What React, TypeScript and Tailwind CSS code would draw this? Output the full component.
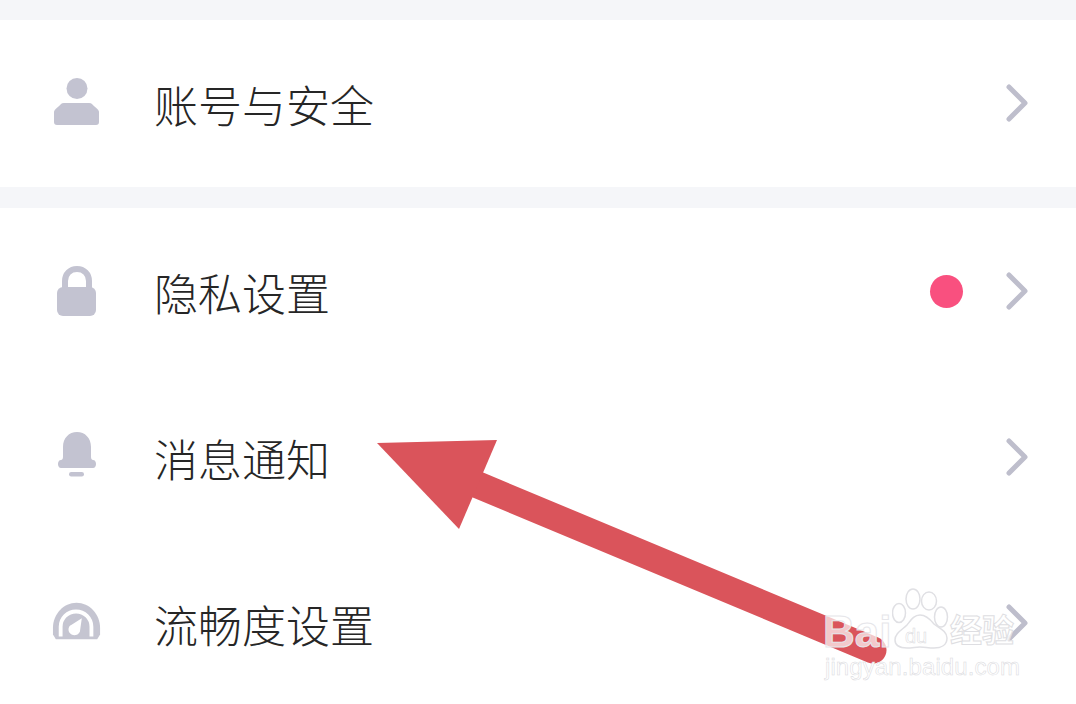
import React, { ReactNode } from 'react';

const font = { fontFamily: '"Noto Sans CJK SC", "Noto Sans", sans-serif' };

function Chevron() {
  return (
    <svg width="24" height="38" viewBox="0 0 24 38" fill="none" className="block">
      <path d="M3 3L19 19L3 35" stroke="#bebecc" strokeWidth="5" strokeLinecap="round" strokeLinejoin="round" />
    </svg>
  );
}

function PersonIcon() {
  return (
    <svg width="48" height="50" viewBox="0 0 48 50" fill="#c3c3d1" className="block">
      <circle cx="24" cy="10.5" r="10.5" />
      <path d="M1 34C1 31 6 29 8 26Q9 25 11 25H36Q38 25 39 26C41 29 46 31 46 34V44C46 46 45 47 43 47H4C2 47 1 46 1 44Z" />
    </svg>
  );
}

function LockIcon() {
  return (
    <svg width="48" height="52" viewBox="0 0 48 52" className="block">
      <path d="M12 26V16C12 9 17 4 24 4C31 4 36 9 36 16V26" fill="none" stroke="#c3c3d1" strokeWidth="6" />
      <rect x="4" y="22" width="39" height="29" rx="6" fill="#c3c3d1" />
    </svg>
  );
}

function BellIcon() {
  return (
    <svg width="48" height="50" viewBox="0 0 48 50" fill="#c3c3d1" className="block">
      <path d="M24 0C32 0 38 6 38 15V25C38 27 39 28 40 28C44 28 44 36 40 36H8C4 36 4 28 8 28C9 28 10 27 10 25V15C10 6 16 0 24 0Z" />
      <rect x="16" y="40" width="15" height="4.5" rx="2.2" />
    </svg>
  );
}

function GaugeIcon() {
  return (
    <svg width="52" height="42" viewBox="0 0 52 42" className="block">
      <path d="M1 33V26C1 12 12 0 25.500 0C39 0 50 12 50 26V33L47 38H4Z" fill="#c5c5d1" />
      <path d="M9 35V25A16 16 0 0 1 41 25V35" fill="none" stroke="#ffffff" strokeWidth="4" />
      <path d="M31 16L29 30C27 34 22 35 19 32C16 29 17 24 20 23Z" fill="#ffffff" />
    </svg>
  );
}

function Row({ icon, label, dot }: { icon: ReactNode; label: string; dot?: boolean }) {
  return (
    <div className="flex h-[166px] items-center pl-[52px] pr-[46px]">
      <div className="flex w-[50px] justify-center">{icon}</div>
      <div className="ml-[52px] flex-1 pt-[2px] text-[44px] font-light leading-none text-[#262626]">{label}</div>
      {dot && <div className="mr-[43px] h-[33px] w-[33px] rounded-full bg-[#f9507f]" />}
      <Chevron />
    </div>
  );
}

function Watermark() {
  return (
    <div className="absolute left-[823px] top-[588px] flex w-[200px] flex-col" style={font}>
      <div className="flex h-[62px] items-start">
        <div className="mt-[22px] w-[69px] font-['Liberation_Sans',sans-serif] text-[44px] font-bold leading-none text-white/70 [-webkit-text-stroke:1px_#e6e6ea]">
          Bai
        </div>
        <div className="relative h-[62px] w-[58px]">
          <svg width="58" height="62" viewBox="0 0 58 62" fill="#ffffff" stroke="#e0e0e4" strokeWidth="1.5" className="block">
            <ellipse cx="7" cy="25" rx="6.500" ry="9.500" />
            <ellipse cx="21" cy="11" rx="7" ry="10" />
            <ellipse cx="37" cy="13" rx="7.500" ry="9" />
            <ellipse cx="49" cy="29" rx="6.500" ry="10" />
            <path d="M28 27C22 27 19 32 15 37C10 42 3 45 3 52C3 58 9 60 15 60C20 60 24 59 28 59C32 59 37 60 42 60C49 60 55 57 55 50C55 43 47 40 42 36C38 31 34 27 28 27Z" />
          </svg>
          <div className="absolute left-[13px] top-[38px] font-['Liberation_Sans',sans-serif] text-[20px] leading-none text-white [-webkit-text-stroke:0.5px_#d8d8dc]">
            du
          </div>
        </div>
        <div className="mt-[24px] whitespace-nowrap text-[32px] font-bold leading-none text-white/80 [-webkit-text-stroke:1px_#dedee2]">
          经验
        </div>
      </div>
      <div className="ml-[2px] mt-[5px] whitespace-nowrap font-['Liberation_Sans',sans-serif] text-[24px] leading-none tracking-[0.1px] text-white [-webkit-text-stroke:0.5px_#d8d8dc]">
        jingyan.baidu.com
      </div>
    </div>
  );
}

export default function App() {
  return (
    <div className="relative h-[704px] w-[1076px] overflow-hidden bg-white" style={font}>
      <div className="h-[20px] bg-[#f5f6f9]" />
      <Row icon={<PersonIcon />} label="账号与安全" />
      <div className="mt-px h-[21px] bg-[#f5f6f9]" />
      <Row icon={<LockIcon />} label="隐私设置" dot />
      <Row icon={<BellIcon />} label="消息通知" />
      <Row icon={<GaugeIcon />} label="流畅度设置" />

      {/* annotation arrow */}
      <svg width="1076" height="704" viewBox="0 0 1076 704" className="pointer-events-none absolute left-0 top-0">
        <path d="M478 485L873 650" stroke="#da545b" strokeWidth="27" strokeLinecap="round" />
        <path d="M377 443L497 440L459 529Z" fill="#da545b" />
      </svg>
      <Watermark />
    </div>
  );
}
